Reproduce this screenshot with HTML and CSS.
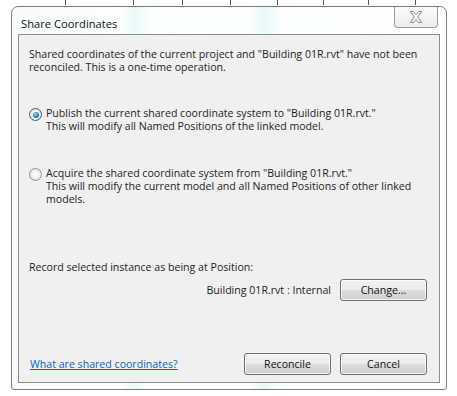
FILE: index.html
```html
<!DOCTYPE html>
<html>
<head>
<meta charset="utf-8">
<link rel="stylesheet" href="styles.css">
</head>
<body>
<svg class="ticks" width="457" height="6" viewBox="0 0 457 6">
  <g stroke="#555" stroke-width="1">
    <line x1="65.5" y1="0" x2="65.5" y2="5"/>
    <line x1="133.5" y1="0" x2="133.5" y2="5"/>
    <line x1="182.5" y1="0" x2="182.5" y2="5"/>
    <line x1="230.5" y1="0" x2="230.5" y2="5"/>
    <line x1="277.5" y1="0" x2="277.5" y2="5"/>
    <line x1="323.5" y1="0" x2="323.5" y2="5"/>
    <line x1="368.5" y1="0" x2="368.5" y2="5"/>
    <line x1="415.5" y1="0" x2="415.5" y2="5"/>
  </g>
</svg>
<div class="window">
  <div class="titlebar">
    <span class="title">Share Coordinates</span>
    <div class="close">
      <svg width="14" height="12" viewBox="0 0 14 12">
        <path d="M1.5 0.5 H4.5 L7 3.5 L9.5 0.5 H12.5 L8.8 6 L12.5 11.5 H9.5 L7 8.5 L4.5 11.5 H1.5 L5.2 6 Z" fill="#fafafa" stroke="#8a8a8a" stroke-width="1" stroke-linejoin="round"/>
      </svg>
    </div>
  </div>
  <div class="client">
    <p class="intro">Shared coordinates of the current project and "Building 01R.rvt" have not been<br>reconciled. This is a one-time operation.</p>
    <div class="option first">
      <span class="radio checked"><span class="dot"></span></span>
      <p>Publish the current shared coordinate system to "Building 01R.rvt."<br>This will modify all Named Positions of the linked model.</p>
    </div>
    <div class="option second">
      <span class="radio"></span>
      <p>Acquire the shared coordinate system from "Building 01R.rvt."<br>This will modify the current model and all Named Positions of other linked<br>models.</p>
    </div>
    <p class="record">Record selected instance as being at Position:</p>
    <div class="position-row">
      <span class="position">Building 01R.rvt : Internal</span>
      <button class="btn">Change...</button>
    </div>
    <div class="footer">
      <a class="help" href="#">What are shared coordinates?</a>
      <div class="actions">
        <button class="btn">Reconcile</button>
        <button class="btn">Cancel</button>
      </div>
    </div>
  </div>
</div>
</body>
</html>
```
FILE: styles.css
```css
html, body {
  margin: 0;
  padding: 0;
  background: #ffffff;
}
body {
  width: 457px;
  height: 396px;
  overflow: hidden;
  font-family: "Open Sans", "Noto Sans", sans-serif;
  font-size: 10.6px;
  color: #1e1e1e;
  white-space: nowrap;
}
.ticks {
  display: block;
}
.window {
  margin-left: 11px;
  width: 436px;
  height: 384px;
  box-sizing: border-box;
  border: 1px solid #7c7c7c;
  border-radius: 7px 7px 3px 3px;
  background: linear-gradient(90deg, #f7fbfb 0%, #fdffff 25%, #e9f9fa 28%, #fdffff 32%, #fbfefe 55%, #e6f8f8 58%, #fcffff 62%, #ffffff 100%);
  display: flex;
  flex-direction: column;
  padding: 0 6px 6px 6px;
}
.titlebar {
  height: 27px;
  display: flex;
  align-items: flex-start;
  justify-content: space-between;
  flex-shrink: 0;
}
.title {
  margin-top: 9px;
  margin-left: 3px;
  font-size: 11.2px;
  color: #111;
}
.close {
  width: 44px;
  height: 21px;
  margin-right: 2px;
  box-sizing: border-box;
  border: 1px solid #9a9a9a;
  border-top: none;
  border-radius: 0 0 4px 4px;
  background: linear-gradient(#fbfbfb, #eeeeee);
  display: flex;
  align-items: center;
  justify-content: center;
}
.client {
  flex: 1;
  border: 1px solid #8d8d8d;
  background: #f0f0f0;
  padding: 10px 12px 0 10px;
  display: flex;
  flex-direction: column;
  box-sizing: border-box;
}
p {
  margin: 0;
  line-height: 13px;
}
.intro {
  margin-top: 3px;
}
.option {
  display: flex;
  align-items: flex-start;
  gap: 4px;
}
.option.first {
  margin-top: 33px;
}
.option.second {
  margin-top: 34px;
}
.radio {
  width: 11px;
  height: 11px;
  margin-top: 1px;
  border-radius: 50%;
  border: 1px solid #8e8f8f;
  background: radial-gradient(circle at 50% 50%, #ffffff 0%, #f2f2f2 45%, #cfd2d4 100%);
  flex-shrink: 0;
  display: flex;
  align-items: center;
  justify-content: center;
}
.radio.checked {
  border-color: #2c628b;
}
.dot {
  width: 6px;
  height: 6px;
  border-radius: 50%;
  background: radial-gradient(circle at 40% 35%, #a3d9f5 0%, #3a8fc8 45%, #0d3f6e 100%);
}
.record {
  margin-top: 55px;
}
.position-row {
  display: flex;
  justify-content: flex-end;
  align-items: center;
  gap: 9px;
  margin-top: 5px;
}
.btn {
  font-family: inherit;
  font-size: 10.6px;
  color: #111;
  width: 87px;
  height: 22px;
  padding: 0;
  border: 1px solid #707070;
  border-radius: 3px;
  background: linear-gradient(#f2f2f2 0%, #ebebeb 50%, #dddddd 51%, #cfcfcf 100%);
  box-shadow: inset 0 0 0 1px rgba(255,255,255,0.7);
}
.footer {
  margin-top: auto;
  margin-bottom: 7px;
  display: flex;
  align-items: center;
  justify-content: space-between;
}
.help {
  color: #0066cc;
  text-decoration: underline;
  margin-left: 1px;
}
.actions {
  display: flex;
  gap: 9px;
}
```
